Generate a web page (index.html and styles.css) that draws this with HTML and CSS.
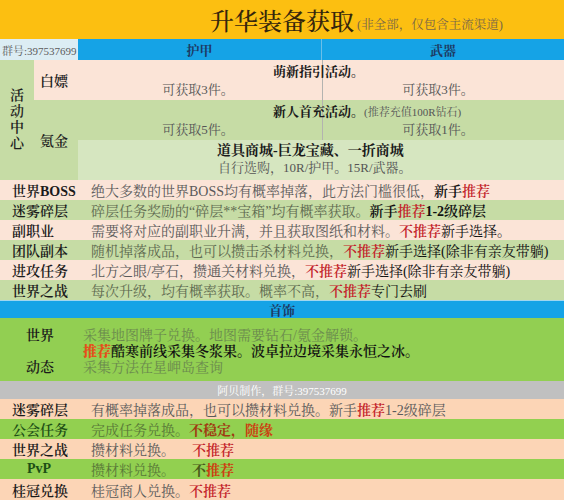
FILE: index.html
```html
<!DOCTYPE html>
<html lang="zh-CN">
<head>
<meta charset="utf-8">
<title>升华装备获取</title>
<link rel="stylesheet" href="styles.css">
</head>
<body>
<div class="sheet">
  <header class="title-bar">
    <h1 class="title">升华装备获取</h1><span class="subtitle">(非全部，仅包含主流渠道)</span>
  </header>

  <div class="head-row">
    <div class="group-no">群号:397537699</div>
    <div class="col-head col-head--split">护甲</div>
    <div class="col-head">武器</div>
  </div>

  <div class="activity">
    <div class="act-label"><span>活动中心</span></div>
    <div class="act-type act-type--free">白嫖</div>
    <div class="act-type act-type--paid">氪金</div>

    <div class="act-row act-row--pink act-row--split">
      <div class="act-title act-title--a">萌新指引活动。</div>
      <div class="act-pair"><span>可获取3件。</span><span>可获取3件。</span></div>
    </div>
    <div class="act-row act-row--green act-row--split">
      <div class="act-title act-title--a">新人首充活动。<small class="act-note">(推荐充值100R钻石)</small></div>
      <div class="act-pair"><span>可获取5件。</span><span>可获取1件。</span></div>
    </div>
    <div class="act-row act-row--light">
      <div class="act-title act-title--b">道具商城-巨龙宝藏、一折商城</div>
      <div class="act-sub">自行选购，10R/护甲。15R/武器。</div>
    </div>
  </div>

  <div class="rows">
    <div class="row row--pink"><div class="label">世界BOSS</div><div class="desc">绝大多数的世界BOSS均有概率掉落，此方法门槛很低，<b class="k">新手</b><b class="r">推荐</b></div></div>
    <div class="row row--green"><div class="label">迷雾碎层</div><div class="desc">碎层任务奖励的“碎层**宝箱”均有概率获取。<b class="k">新手</b><b class="r">推荐</b><b class="k">1-2级碎层</b></div></div>
    <div class="row row--pink"><div class="label">副职业</div><div class="desc">需要将对应的副职业升满，并且获取图纸和材料。<b class="r">不推荐</b><span class="k">新手选择。</span></div></div>
    <div class="row row--green"><div class="label">团队副本</div><div class="desc">随机掉落成品，也可以攒击杀材料兑换，<b class="r">不推荐</b><span class="k">新手选择(除非有亲友带躺)</span></div></div>
    <div class="row row--pink"><div class="label">进攻任务</div><div class="desc">北方之眼/亭石，攒通关材料兑换，<b class="r">不推荐</b><span class="k">新手选择(除非有亲友带躺)</span></div></div>
    <div class="row row--green"><div class="label">世界之战</div><div class="desc">每次升级，均有概率获取。概率不高，<b class="r">不推荐</b><span class="k">专门去刷</span></div></div>
  </div>

  <div class="section-bar">首饰</div>

  <div class="jewel">
    <div class="jewel-label"><span>世界</span><span></span><span>动态</span></div>
    <div class="jewel-text">
      <span class="faint">采集地图牌子兑换。地图需要钻石/氪金解锁。</span>
      <span class="strong"><b class="hot">推荐</b>酷寒前线采集冬浆果。波卓拉边境采集永恒之冰。</span>
      <span class="faint">采集方法在星岬岛查询</span>
    </div>
  </div>

  <div class="credit">阿贝制作，群号:397537699</div>

  <div class="rows rows--bright">
    <div class="row row--peach"><div class="label">迷雾碎层</div><div class="desc">有概率掉落成品，也可以攒材料兑换。新手<b class="r">推荐</b>1-2级碎层</div></div>
    <div class="row row--lime"><div class="label">公会任务</div><div class="desc">完成任务兑换。<b class="warn">不稳定，</b><b class="warn2">随缘</b></div></div>
    <div class="row row--peach"><div class="label">世界之战</div><div class="desc">攒材料兑换。<b class="r gap">不推荐</b></div></div>
    <div class="row row--lime"><div class="label label--center">PvP</div><div class="desc">攒材料兑换。<b class="gap"><span class="dim">不</span><span class="warn2">推荐</span></b></div></div>
    <div class="row row--peach row--last"><div class="label">桂冠兑换</div><div class="desc">桂冠商人兑换。<b class="r">不推荐</b></div></div>
  </div>
</div>
</body>
</html>
```

FILE: styles.css
```css
* {
  box-sizing: border-box;
  margin: 0;
  padding: 0;
}

html,
body {
  width: 564px;
  height: 500px;
  overflow: hidden;
}

body {
  font-family: "Liberation Serif", "Noto Serif CJK SC", "Noto Sans CJK SC", serif;
  color: #222;
  background: #fcd5b6;
}

.sheet {
  width: 564px;
  display: flex;
  flex-direction: column;
}

/* title */
.title-bar {
  height: 39px;
  background: #fcbf11;
  display: flex;
  align-items: center;
  padding: 5px 0 0 210px;
  white-space: nowrap;
}

.title {
  font-size: 24px;
  font-weight: 500;
  line-height: 1;
  color: #35260c;
}

.subtitle {
  font-size: 12.5px;
  color: #7a6848;
  margin: 4px 0 0 3px;
}

/* header */
.head-row {
  display: grid;
  grid-template-columns: 78px 244px 242px;
  height: 21px;
  background: #15a3e6;
}

.group-no {
  background: #dcedf4;
  font-size: 11px;
  color: #5b5b5b;
  display: flex;
  align-items: center;
  padding-left: 2px;
  white-space: nowrap;
}

.col-head {
  display: flex;
  align-items: center;
  justify-content: center;
  font-size: 13px;
  font-weight: 700;
  color: #1d3a63;
}

.col-head--split {
  border-right: 1px solid #6cbfe8;
}

/* activity block */
.activity {
  display: grid;
  grid-template-columns: 34px 44px 1fr;
  grid-template-rows: 40px 40px 40px;
}

.act-label {
  grid-column: 1;
  grid-row: 1 / 4;
  background: #c6dca5;
  display: flex;
  align-items: center;
  justify-content: center;
}

.act-label span {
  width: 14px;
  font-size: 14px;
  line-height: 16px;
  font-weight: 600;
  color: #1e1e1e;
}

.act-type {
  grid-column: 2;
  display: flex;
  align-items: center;
  padding-left: 6px;
  font-size: 14px;
  font-weight: 600;
  color: #1e1e1e;
}

.act-type--free {
  grid-row: 1;
  background: #fbe4d7;
}

.act-type--paid {
  grid-row: 2 / 4;
  background: #c6dca5;
}

.act-row {
  grid-column: 3;
  padding-top: 3px;
  line-height: 18px;
  white-space: nowrap;
}

.act-row--pink {
  background-color: #fbe4d7;
}

.act-row--green {
  background-color: #c6dca5;
}

.act-row--light {
  background-color: #d6e6c0;
  padding-top: 2px;
  line-height: 17px;
}

.act-row--split {
  background-image: linear-gradient(#b3b3b0, #b3b3b0);
  background-size: 1px 100%;
  background-position: 244px 0;
  background-repeat: no-repeat;
}

.act-title {
  font-size: 13px;
  font-weight: 700;
  color: #1a1a1a;
}

.act-title--a {
  padding-left: 195px;
}

.act-title--b {
  padding-left: 139px;
  font-size: 14px;
}

.act-note {
  font-size: 11px;
  font-weight: 400;
  color: #555;
}

.act-pair {
  display: grid;
  grid-template-columns: 240px 1fr;
  font-size: 13px;
  color: #555;
  text-align: center;
}

.act-pair span:last-child {
  padding-right: 6px;
}

.act-sub {
  padding-left: 140px;
  font-size: 13px;
  color: #555;
}

/* list rows */
.rows {
  display: flex;
  flex-direction: column;
}

.row {
  display: grid;
  grid-template-columns: 78px 1fr;
  align-items: center;
  height: 20px;
  white-space: nowrap;
  font-size: 14px;
}

.label {
  padding-left: 12px;
  font-weight: 600;
  color: #1a1a1a;
}

.label--center {
  padding-left: 0;
  text-align: center;
}

.desc {
  padding-left: 13px;
  color: #5a5a5a;
}

.row--pink {
  background: #fbe4d7;
}

.row--green {
  background: #c6dca5;
}

.row--green .desc {
  color: #5e6a50;
}

.k {
  color: #111;
  font-weight: 600;
}

span.k {
  font-weight: 400;
}

.r {
  color: #c3242b;
  font-weight: 600;
}

/* section bar */
.section-bar {
  height: 18px;
  background: #15a3e6;
  color: #1d3a63;
  font-size: 13px;
  font-weight: 700;
  display: flex;
  align-items: center;
  justify-content: center;
  border-top: 1px solid #9fd6ef;
}

/* jewelry */
.jewel {
  display: grid;
  grid-template-columns: 78px 1fr;
  height: 63px;
  background: #92cf52;
  padding-top: 10px;
  font-size: 14px;
  line-height: 16px;
  white-space: nowrap;
}

.jewel-label,
.jewel-text {
  display: grid;
  grid-template-rows: 16px 16px 16px;
}

.jewel-label {
  padding-left: 26px;
  font-weight: 600;
  color: #1a1a1a;
}

.jewel-text {
  padding-left: 5px;
}

.faint {
  color: #6b8a4e;
}

.strong {
  color: #111;
  font-weight: 600;
}

.hot {
  color: #e4501c;
}

/* credit */
.credit {
  height: 18px;
  background: #c0c0c0;
  color: #fff;
  font-size: 11px;
  display: flex;
  align-items: center;
  justify-content: center;
  white-space: nowrap;
}

/* bottom rows */
.row--peach {
  background: #fcd5b6;
}

.row--lime {
  background: #92d050;
}

.row--last {
  height: 21px;
}

.row--lime .label {
  color: #1d4f16;
}

.row--lime .desc {
  color: #587838;
}

.warn {
  color: #a03a12;
}

.warn2 {
  color: #cc3f12;
}

.dim {
  color: #4a5a1a;
}

.gap {
  margin-left: 17px;
}
```
